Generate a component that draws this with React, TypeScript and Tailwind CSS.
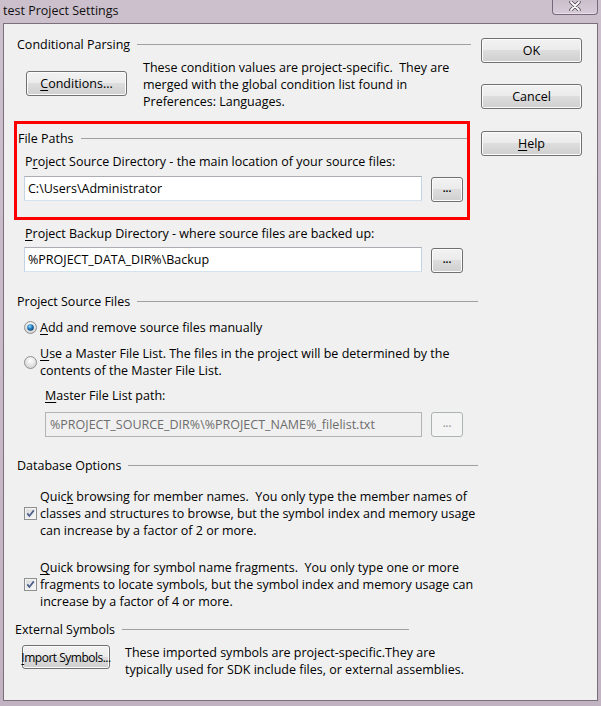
import React from "react";

const btn =
  "flex items-center justify-center rounded-[3px] border border-[#707070] bg-[linear-gradient(to_bottom,#f2f2f2_0%,#ebebeb_49%,#dddddd_50%,#cfcfcf_100%)] shadow-[inset_0_0_0_1px_#fcfcfc] text-black";

const GroupHeader = ({ title, cls }: { title: string; cls: string }) => (
  <div className={`flex items-center h-[17px] ${cls}`}>
    <span className="whitespace-nowrap">{title}</span>
    <div className="ml-[7px] h-px flex-1 bg-[#a0a0a0]" />
  </div>
);

const Radio = ({ on }: { on?: boolean }) => (
  <svg width="13" height="13" viewBox="0 0 13 13" className="shrink-0">
    <defs>
      <radialGradient id="rf" cx="50%" cy="35%" r="65%">
        <stop offset="0" stopColor="#ffffff" />
        <stop offset="1" stopColor="#d2d2d2" />
      </radialGradient>
      <radialGradient id="rd" cx="40%" cy="35%" r="70%">
        <stop offset="0" stopColor="#9fe2ff" />
        <stop offset="0.45" stopColor="#2784c8" />
        <stop offset="1" stopColor="#0a3767" />
      </radialGradient>
    </defs>
    <circle cx="6.5" cy="6.5" r="6" fill="url(#rf)" stroke="#8e8f8f" />
    {on && <circle cx="6.5" cy="6.5" r="3.3" fill="url(#rd)" />}
  </svg>
);

const Check = () => (
  <svg width="13" height="13" viewBox="0 0 13 13" className="shrink-0">
    <defs>
      <linearGradient id="cf" x1="0" y1="0" x2="1" y2="1">
        <stop offset="0" stopColor="#d8d8d8" />
        <stop offset="1" stopColor="#f8f8f8" />
      </linearGradient>
    </defs>
    <rect x="0.5" y="0.5" width="12" height="12" fill="#f4f4f4" stroke="#8e8f8f" />
    <rect x="2" y="2" width="9" height="9" fill="url(#cf)" stroke="#f0f0f0" strokeWidth="0.6" />
    <path d="M3.3 6.4 L5.4 9 L9.8 3.4" fill="none" stroke="#4a5f8c" strokeWidth="1.7" />
  </svg>
);

const Dots = ({ off }: { off?: boolean }) =>
  off ? (
    <div className="w-[32px] h-[25px] rounded-[3px] border border-[#adb2b5] bg-[#f4f4f4] flex items-center justify-center text-[10px] font-bold text-[#a0a0a0] leading-none pb-[3px]">
      ...
    </div>
  ) : (
    <div className={`${btn} w-[32px] h-[25px] text-[10px] font-bold leading-none pb-[3px] text-[#202040]`}>...</div>
  );

const Field = ({ value, cls }: { value: string; cls: string }) => (
  <div
    className={`h-[25px] flex items-center pl-[3px] bg-white border border-t-[#abadb3] border-x-[#c3d3e6] border-b-[#d5e2f0] whitespace-nowrap overflow-hidden ${cls}`}
  >
    {value}
  </div>
);

export default function App() {
  return (
    <div className="w-[601px] h-[706px] bg-[linear-gradient(to_bottom,#cdc0cd,#c2b3c3)] font-['Open_Sans',sans-serif] text-[12.5px] leading-[17px] text-black overflow-hidden">
      {/* title bar */}
      <div className="h-[23px] flex justify-between items-start">
        <div className="pl-[3px] pt-[2px] text-[12.5px] leading-[17px] text-[#101010]">test Project Settings</div>
        <div className="mr-[3px] w-[46px] h-[15px] rounded-b-[4px] border border-t-0 border-[#76687a] bg-[linear-gradient(to_bottom,#cbbfcc,#d6cbd6)] shadow-[inset_0_-1px_0_0_#e8e0e8] flex items-start justify-center">
          <svg width="12" height="10" viewBox="0 0 12 10" className="mt-[1px]">
            <path d="M2 1 L10 9 M10 1 L2 9" stroke="#4a4050" strokeWidth="3.4" strokeLinecap="round" />
            <path d="M2 1 L10 9 M10 1 L2 9" stroke="#ffffff" strokeWidth="1.8" strokeLinecap="round" />
          </svg>
        </div>
      </div>

      {/* dialog body */}
      <div className="mx-[3px] h-[678px] border border-[#7a6f7b] bg-[#f0f0f0] flex">
        <div className="w-[477px] flex flex-col">
          <GroupHeader title="Conditional Parsing" cls="mt-[12px] pl-[13px] mr-[10px]" />
          <div className="mt-[6px] flex items-start">
            <div className={`${btn} ml-[22px] mt-[12px] w-[101px] h-[25px]`}>
              <span>
                <u className="underline-offset-2">C</u>onditions...
              </span>
            </div>
            <div className="ml-[16px] whitespace-pre">
              <div>These condition values are project-specific.  They are</div>
              <div>merged with the global condition list found in</div>
              <div>Preferences: Languages.</div>
            </div>
          </div>

          {/* highlighted File Paths box */}
          <div className="mt-[11px] ml-[10px] w-[456px] border-[3px] border-[#ff0000] pb-[15px]">
            <GroupHeader title="File Paths" cls="mt-[6px] pl-[1px]" />
            <div className="mt-[6px] pl-[8px] whitespace-nowrap">
              P<u className="underline-offset-2">r</u>oject Source Directory - the main location of your source files:
            </div>
            <div className="mt-[6px] flex items-start">
              <Field value="C:\Users\Administrator" cls="ml-[7px] w-[398px]" />
              <div className="ml-[9px] mt-[1px]">
                <Dots />
              </div>
            </div>
          </div>

          <div className="mt-[5px] pl-[21px] whitespace-nowrap">
            <u className="underline-offset-2">P</u>roject Backup Directory - where source files are backed up:
          </div>
          <div className="mt-[5px] flex items-start">
            <Field value="%PROJECT_DATA_DIR%\Backup" cls="ml-[20px] w-[398px]" />
            <div className="ml-[9px] mt-[1px]">
              <Dots />
            </div>
          </div>

          <GroupHeader title="Project Source Files" cls="mt-[20px] pl-[13px] mr-[3px]" />
          <div className="mt-[9px] ml-[20px] flex items-center gap-[3px]">
            <Radio on />
            <span>
              <u className="underline-offset-2">A</u>dd and remove source files manually
            </span>
          </div>
          <div className="mt-[9px] ml-[20px] flex items-center gap-[3px]">
            <Radio />
            <div className="whitespace-nowrap">
              <div>
                <u className="underline-offset-2">U</u>se a Master File List. The files in the project will be determined by the
              </div>
              <div>contents of the Master File List.</div>
            </div>
          </div>
          <div className="mt-[8px] pl-[41px]">
            <u className="underline-offset-2">M</u>aster File List path:
          </div>
          <div className="mt-[8px] flex items-start">
            <div className="ml-[41px] w-[377px] h-[25px] flex items-center pl-[4px] border border-[#b4b4b4] bg-[#f0f0f0] text-[#6d6d6d] whitespace-nowrap overflow-hidden">
              %PROJECT_SOURCE_DIR%\%PROJECT_NAME%_filelist.txt
            </div>
            <div className="ml-[9px]">
              <Dots off />
            </div>
          </div>

          <GroupHeader title="Database Options" cls="mt-[20px] pl-[13px] mr-[3px]" />
          <div className="mt-[14px] ml-[20px] flex items-center gap-[3px]">
            <Check />
            <div className="whitespace-pre">
              <div>
                Quic<u className="underline-offset-2">k</u> browsing for member names.  You only type the member names of
              </div>
              <div>classes and structures to browse, but the symbol index and memory usage</div>
              <div>can increase by a factor of 2 or more.</div>
            </div>
          </div>
          <div className="mt-[20px] ml-[20px] flex items-center gap-[3px]">
            <Check />
            <div className="whitespace-pre">
              <div>
                <u className="underline-offset-2">Q</u>uick browsing for symbol name fragments.  You only type one or more
              </div>
              <div>fragments to locate symbols, but the symbol index and memory usage can</div>
              <div>increase by a factor of 4 or more.</div>
            </div>
          </div>

          <GroupHeader title="External Symbols" cls="mt-[11px] pl-[11px] mr-[72px]" />
          <div className="mt-[6px] flex items-start">
            <div className={`${btn} ml-[18px] mt-[1px] w-[88px] h-[24px] whitespace-nowrap text-[12px] tracking-[-0.5px]`}>
              <span>
                <u className="underline-offset-2">I</u>mport Symbols...
              </span>
            </div>
            <div className="ml-[15px] whitespace-nowrap">
              <div>These imported symbols are project-specific.They are</div>
              <div>typically used for SDK include files, or external assemblies.</div>
            </div>
          </div>
        </div>

        {/* command buttons */}
        <div className="w-[101px] flex flex-col">
          <div className={`${btn} mt-[14px] h-[25px]`}>OK</div>
          <div className={`${btn} mt-[21px] h-[25px]`}>Cancel</div>
          <div className={`${btn} mt-[22px] h-[25px]`}>
            <span>
              <u className="underline-offset-2">H</u>elp
            </span>
          </div>
        </div>
      </div>
    </div>
  );
}
